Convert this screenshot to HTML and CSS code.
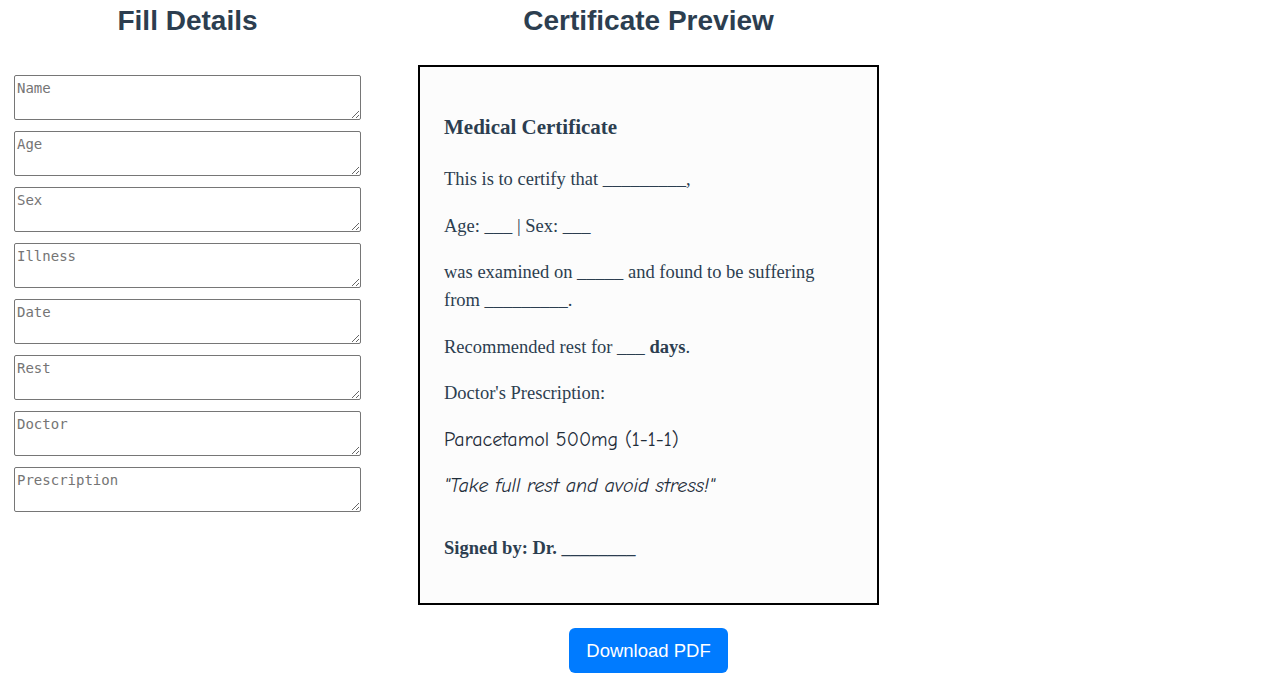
FILE: index.html
```html
<!DOCTYPE html>
<html>
<head>
<meta charset="utf-8">
<link rel="stylesheet" href="styles.css">
</head>
<body>
<div class="page">
  <section class="form-col">
    <h2 class="title">Fill Details</h2>
    <div class="fields">
      <textarea class="field" placeholder="Name"></textarea>
      <textarea class="field" placeholder="Age"></textarea>
      <textarea class="field" placeholder="Sex"></textarea>
      <textarea class="field" placeholder="Illness"></textarea>
      <textarea class="field" placeholder="Date"></textarea>
      <textarea class="field" placeholder="Rest"></textarea>
      <textarea class="field" placeholder="Doctor"></textarea>
      <textarea class="field" placeholder="Prescription"></textarea>
    </div>
  </section>
  <section class="preview-col">
    <h2 class="title">Certificate Preview</h2>
    <div class="cert">
      <h3 class="cert-title">Medical Certificate</h3>
      <p>This is to certify that _________,</p>
      <p>Age: ___ | Sex: ___</p>
      <p>was examined on _____ and found to be suffering from _________.</p>
      <p>Recommended rest for ___ <b>days</b>.</p>
      <p>Doctor's Prescription:</p>
      <p class="hand">Paracetamol 500mg (1-1-1)</p>
      <p class="hand quote">"Take full rest and avoid stress!"</p>
      <p class="signed"><b>Signed by: Dr. ________</b></p>
    </div>
    <button class="btn">Download PDF</button>
  </section>
</div>
</body>
</html>
```
FILE: styles.css
```css
html, body {
  margin: 0;
  padding: 0;
  background: #ffffff;
}
body {
  font-family: "Liberation Sans", Arial, sans-serif;
  color: #2c3e50;
}
.page {
  display: flex;
  align-items: flex-start;
  gap: 57px;
  padding: 5px 14px 0;
}
.title {
  margin: 0;
  font-size: 28px;
  line-height: 32px;
  font-weight: bold;
  text-align: center;
  color: #2c3e50;
}
.form-col {
  width: 347px;
}
.fields {
  display: flex;
  flex-direction: column;
  gap: 11px;
  margin-top: 38px;
}
.field {
  box-sizing: border-box;
  width: 347px;
  height: 45px;
  margin: 0;
  padding: 4px 2px 2px;
  border: 1px solid #767676;
  border-radius: 2px;
  font-family: "DejaVu Sans Mono", "Liberation Mono", monospace;
  font-size: 14px;
  line-height: 16px;
  color: #333;
  resize: vertical;
}
.field::placeholder {
  color: #757575;
}
.preview-col {
  width: 461px;
  display: flex;
  flex-direction: column;
  align-items: center;
}
.cert {
  box-sizing: border-box;
  width: 461px;
  margin-top: 28px;
  border: 2px solid #000;
  background: #fcfcfc;
  padding: 46px 30px 41px 24px;
  font-family: "Liberation Serif", "Times New Roman", serif;
  font-size: 18.5px;
  line-height: 28px;
  color: #2c3e50;
}
.cert-title {
  margin: 0 0 24px;
  font-size: 21px;
  line-height: 28px;
  font-weight: bold;
}
.cert p {
  margin: 18.5px 0 0;
}
.cert p:first-of-type {
  margin-top: 0;
}
.hand {
  font-family: "Comic Sans MS", "Comic Neue", cursive;
  font-size: 20px;
  color: #1f2d3a;
}
.quote {
  font-style: italic;
}
.cert .signed {
  margin-top: 34px;
}
.btn {
  margin-top: 23px;
  width: 159px;
  height: 45px;
  border: none;
  border-radius: 6px;
  background: #007bff;
  color: #fff;
  font-family: "Liberation Sans", Arial, sans-serif;
  font-size: 18.5px;
  cursor: pointer;
}
```
